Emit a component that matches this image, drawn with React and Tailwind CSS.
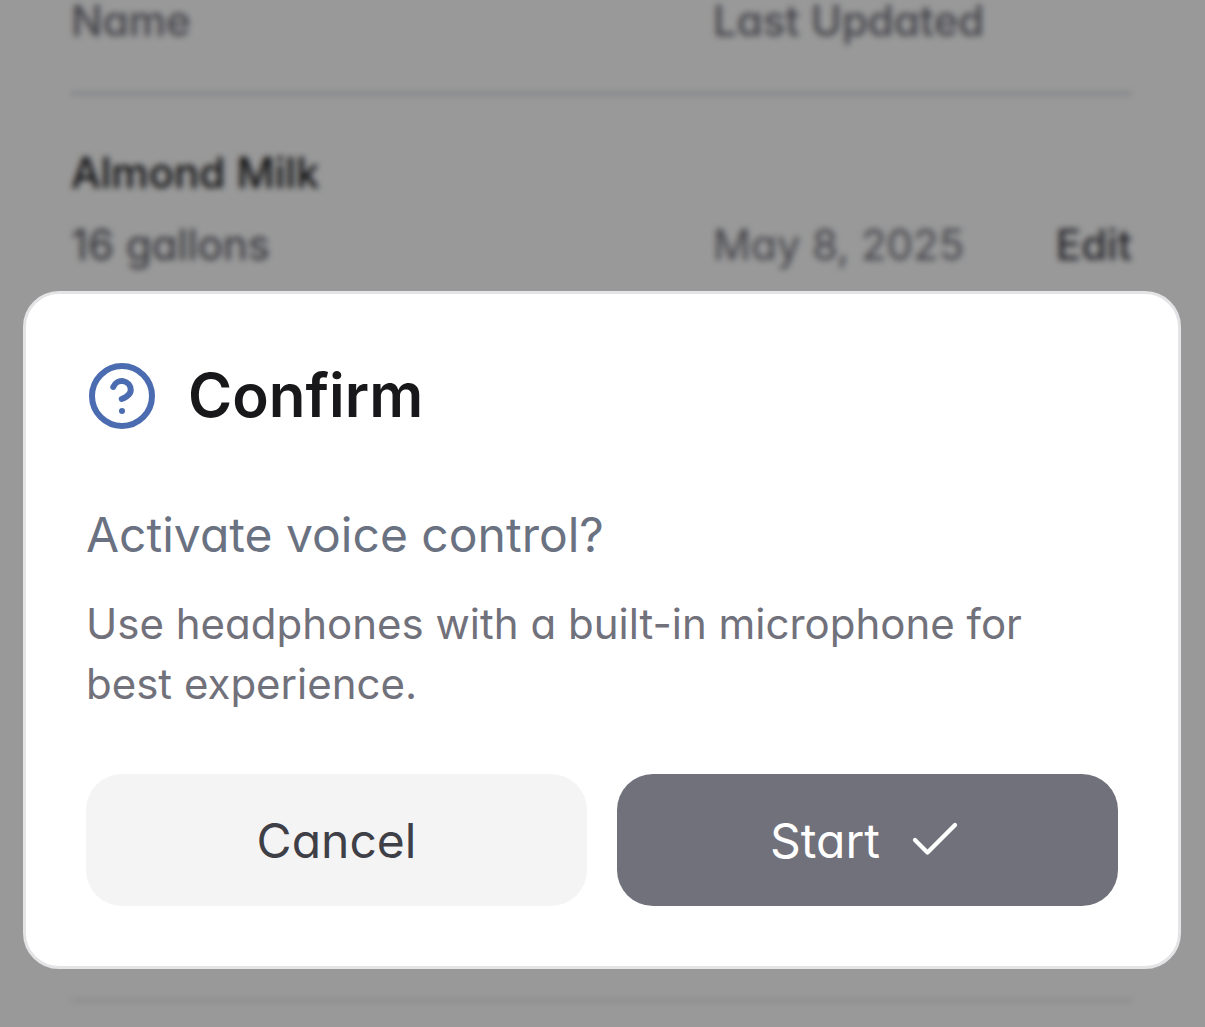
import { Check, CircleHelp } from "lucide-react";

export default function App() {
  return (
    <div className="relative h-screen overflow-hidden bg-white font-['Inter',sans-serif] [font-feature-settings:'cv11'] [font-optical-sizing:none]">
      <main className="pl-[71px] pr-[73px]">
        <table className="w-full table-fixed border-collapse text-left text-[42px]">
          <colgroup>
            <col />
            <col className="w-[285px]" />
            <col className="w-[134px]" />
          </colgroup>
          <thead>
            <tr className="border-b-[3px] border-gray-300 leading-[42px] text-zinc-500">
              <th scope="col" className="pb-[50px] font-medium">Name</th>
              <th scope="col" colSpan={2} className="pb-[50px] font-medium">Last Updated</th>
            </tr>
          </thead>
          <tbody className="leading-[72px]">
            <tr>
              <th scope="row" colSpan={3} className="pt-[42px] font-medium text-zinc-900">Almond Milk</th>
            </tr>
            <tr className="h-[791px] border-b-[3px] border-zinc-200 align-top">
              <td className="text-zinc-600">16 gallons</td>
              <td className="whitespace-nowrap text-zinc-500">May 8, 2025</td>
              <td className="text-right font-medium text-zinc-700">
                <button type="button">Edit</button>
              </td>
            </tr>
          </tbody>
        </table>
      </main>

      <div className="fixed inset-0 flex items-end bg-black/40 pb-[58px] pl-[23px] pr-6 backdrop-blur-[3px]">
        <div
          role="dialog"
          aria-modal="true"
          aria-labelledby="confirm-title"
          className="w-full rounded-[36px] border-[3px] border-[#e4e4e7] bg-white p-[60px]"
        >
          <header className="flex items-center gap-[30px]">
            <CircleHelp className="size-[72px] shrink-0 text-[#4b6cb0]" strokeWidth={2} />
            <h2 id="confirm-title" className="pb-[2px] text-[60px] leading-[82px] font-semibold text-zinc-900">
              Confirm
            </h2>
          </header>
          <p className="mt-[60px] text-[48px] leading-[74px] text-gray-500">Activate voice control?</p>
          <p className="mt-[22px] text-[42px] leading-[60px] text-zinc-500">
            Use headphones with a built-in microphone for best experience.
          </p>
          <div className="mt-[60px] grid grid-cols-2 gap-[30px] text-[48px] leading-[74px]">
            <button type="button" className="rounded-[36px] bg-[#f4f4f4] pt-[30px] pb-7 text-zinc-700">
              Cancel
            </button>
            <button
              type="button"
              className="flex items-center justify-center gap-[25px] rounded-[36px] bg-zinc-500 pt-[30px] pb-7 text-white"
            >
              Start
              <Check className="mb-[2px] size-[60px]" strokeWidth={1.7} />
            </button>
          </div>
        </div>
      </div>
    </div>
  );
}
